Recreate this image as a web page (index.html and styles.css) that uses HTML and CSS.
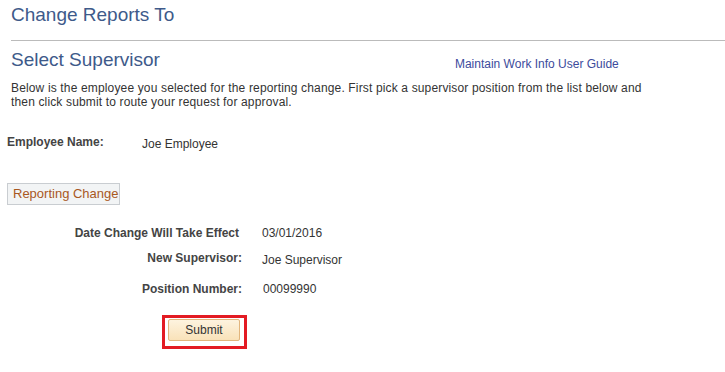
FILE: index.html
```html
<!DOCTYPE html>
<html lang="en">
<head>
    <meta charset="UTF-8">
    <title>Change Reports To</title>
    <link rel="stylesheet" href="styles.css">
</head>
<body>
    <header class="page-title">
        <h1>Change Reports To</h1>
    </header>
    <div class="section-head">
        <h2>Select Supervisor</h2>
        <a class="guide" href="#">Maintain Work Info User Guide</a>
    </div>
    <p class="intro">Below is the employee you selected for the reporting change. First pick a supervisor position from the list below and then click submit to route your request for approval.</p>

    <div class="employee">
        <span class="label">Employee Name:</span>
        <span class="value">Joe Employee</span>
    </div>

    <div class="tab">Reporting Change</div>

    <div class="fields">
        <div class="row row-date">
            <span class="label">Date Change Will Take Effect</span>
            <span class="value">03/01/2016</span>
        </div>
        <div class="row row-sup">
            <span class="label">New Supervisor:</span>
            <span class="value">Joe Supervisor</span>
        </div>
        <div class="row row-pos">
            <span class="label">Position Number:</span>
            <span class="value">00099990</span>
        </div>
    </div>

    <div class="actions">
        <div class="highlight">
            <button class="btn" type="button">Submit</button>
        </div>
    </div>
</body>
</html>
```

FILE: styles.css
```css
body {
    font-family: "Liberation Sans", Arial, sans-serif;
    font-size: 12px;
    color: #333;
    margin: 0;
    padding: 0;
    background-color: #fff;
}
.page-title {
    margin-left: 11px;
    border-bottom: 1px solid #bbb;
    height: 40px;
}
h1, h2 {
    font-weight: normal;
    font-size: 19px;
    color: #3e5a8a;
    margin: 0;
}
h1 {
    padding-top: 4px;
}
.section-head {
    display: flex;
    align-items: flex-end;
    padding-left: 11px;
    margin-top: 9px;
    height: 21px;
}
.guide {
    margin-left: 295px;
    color: #3c4b9c;
    text-decoration: none;
    font-size: 12px;
}
.intro {
    margin: 10px 0 0 11px;
    width: 645px;
    line-height: 14px;
    letter-spacing: 0.15px;
}
.employee {
    display: flex;
    margin: 26px 0 0 7px;
}
.label {
    font-weight: bold;
    color: #444;
}
.employee .label {
    width: 135px;
}
.employee .value {
    padding-top: 2px;
}
.tab {
    width: fit-content;
    margin: 32px 0 0 7px;
    padding: 2px 0 2px 5px;
    line-height: 16px;
    font-size: 13px;
    color: #a9581f;
    background-color: #f2f4f5;
    border: 1px solid #c9cdd1;
    white-space: nowrap;
}
.fields {
    margin-top: 21px;
}
.row {
    display: grid;
    grid-template-columns: 242px auto;
    column-gap: 20px;
}
.row .label {
    text-align: right;
}
.row-date .label {
    padding-right: 3px;
}
.row-sup {
    margin-top: 11px;
}
.row-sup .value {
    padding-top: 2px;
}
.row-pos {
    margin-top: 15px;
}
.row-pos .value {
    padding-left: 1px;
}
.actions {
    margin: 19px 0 0 162px;
}
.highlight {
    display: inline-block;
    border: 3px solid #e31b23;
    padding: 1px 4px 5px 3px;
}
.btn {
    font-family: "Liberation Sans", Arial, sans-serif;
    font-size: 12px;
    color: #333;
    width: 72px;
    height: 22px;
    padding: 0;
    background: linear-gradient(#fdf3df, #f9e2b9);
    border: 1px solid #e2b57c;
    border-radius: 2px;
    cursor: pointer;
}
```
